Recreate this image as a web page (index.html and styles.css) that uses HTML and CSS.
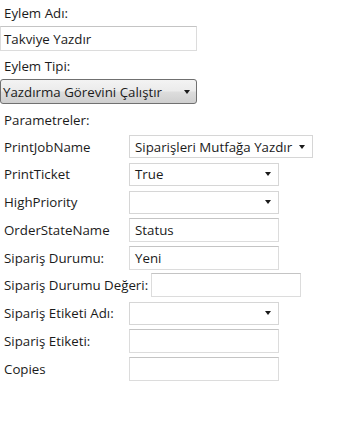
FILE: index.html
```html
<!DOCTYPE html>
<html lang="tr">
<head>
<meta charset="utf-8">
<link rel="stylesheet" href="styles.css">
</head>
<body>
<div class="page">
  <div class="caption">Eylem Adı:</div>
  <div class="textbox main-box"><span class="val">Takviye Yazdır</span></div>
  <div class="caption">Eylem Tipi:</div>
  <div class="button-combo"><span class="val">Yazdırma Görevini Çalıştır</span><span class="arrow"></span></div>
  <div class="caption params-title">Parametreler:</div>
  <div class="params">
    <div class="row"><span class="label">PrintJobName</span><div class="combo wide"><span class="val">Siparişleri Mutfağa Yazdır</span><span class="arrow"></span></div></div>
    <div class="row"><span class="label">PrintTicket</span><div class="combo"><span class="val">True</span><span class="arrow"></span></div></div>
    <div class="row"><span class="label">HighPriority</span><div class="combo"><span class="val"></span><span class="arrow"></span></div></div>
    <div class="row"><span class="label">OrderStateName</span><div class="textbox field"><span class="val">Status</span></div></div>
    <div class="row"><span class="label">Sipariş Durumu:</span><div class="textbox field"><span class="val">Yeni</span></div></div>
    <div class="row"><span class="label">Sipariş Durumu Değeri:</span><div class="textbox field"><span class="val"></span></div></div>
    <div class="row"><span class="label">Sipariş Etiketi Adı:</span><div class="combo"><span class="val"></span><span class="arrow"></span></div></div>
    <div class="row"><span class="label">Sipariş Etiketi:</span><div class="textbox field"><span class="val"></span></div></div>
    <div class="row"><span class="label">Copies</span><div class="textbox field"><span class="val"></span></div></div>
  </div>
</div>
</body>
</html>
```
FILE: styles.css
```css
html, body {
  margin: 0;
  padding: 0;
  background: #ffffff;
}
body {
  font-family: "Open Sans", "Noto Sans", sans-serif;
  font-size: 13.3px;
  color: #1b1b1b;
}
.page {
  padding-top: 4px;
  display: flex;
  flex-direction: column;
  align-items: flex-start;
}
.caption {
  padding-left: 4px;
  height: 18px;
  line-height: 18px;
  margin-bottom: 4px;
}
.params-title {
  margin-top: 0;
  margin-bottom: 6px;
}
.textbox {
  box-sizing: border-box;
  background: #fff;
  border: 1px solid #dcdcdc;
  border-top-color: #c4c4c4;
  display: flex;
  align-items: center;
}
.main-box {
  width: 197px;
  height: 25px;
  padding-left: 3px;
  margin-bottom: 6px;
}
.button-combo {
  box-sizing: border-box;
  width: 197px;
  height: 25px;
  border: 1px solid #707070;
  border-radius: 3px;
  background: linear-gradient(#f3f3f3 0%, #ebebeb 48%, #dddddd 52%, #cfcfcf 100%);
  display: flex;
  align-items: center;
  padding-left: 2px;
  padding-right: 6px;
  margin-bottom: 7px;
}
.button-combo .val { flex: 1; white-space: nowrap; }
.arrow {
  width: 0;
  height: 0;
  border-left: 3px solid transparent;
  border-right: 3px solid transparent;
  border-top: 4px solid #1a1a1a;
}
.params {
  display: flex;
  flex-direction: column;
  align-self: stretch;
}
.row {
  display: flex;
  align-items: center;
  height: 23px;
  margin-bottom: 4.8px;
}
.label {
  padding-left: 4px;
  min-width: 122px;
  margin-right: 3px;
  white-space: nowrap;
}
.combo {
  box-sizing: border-box;
  width: 150px;
  height: 23px;
  background: #fff;
  border: 1px solid #d6d6d6;
  display: flex;
  align-items: center;
  padding-left: 5px;
  padding-right: 7px;
}
.combo .val { flex: 1; white-space: nowrap; }
.combo.wide { width: 184px; }
.field {
  width: 150px;
  height: 24px;
  padding-left: 5px;
}
```
